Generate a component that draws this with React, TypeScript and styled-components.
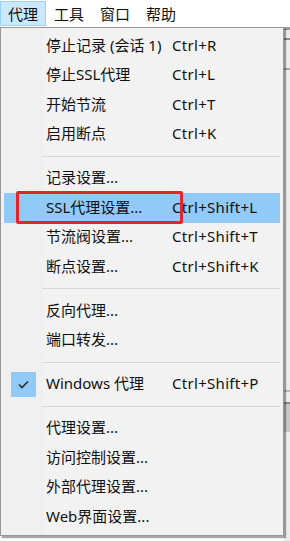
import React from "react"
import styled, { createGlobalStyle } from "styled-components"

interface Entry {
  label: string
  shortcut?: string
  checked?: boolean
  active?: boolean
}

const groups: Entry[][] = [
  [
    { label: "停止记录 (会话 1)", shortcut: "Ctrl+R" },
    { label: "停止SSL代理", shortcut: "Ctrl+L" },
    { label: "开始节流", shortcut: "Ctrl+T" },
    { label: "启用断点", shortcut: "Ctrl+K" },
  ],
  [
    { label: "记录设置..." },
    { label: "SSL代理设置...", shortcut: "Ctrl+Shift+L", active: true },
    { label: "节流阀设置...", shortcut: "Ctrl+Shift+T" },
    { label: "断点设置...", shortcut: "Ctrl+Shift+K" },
  ],
  [{ label: "反向代理..." }, { label: "端口转发..." }],
  [{ label: "Windows 代理", shortcut: "Ctrl+Shift+P", checked: true }],
  [
    { label: "代理设置..." },
    { label: "访问控制设置..." },
    { label: "外部代理设置..." },
    { label: "Web界面设置..." },
  ],
]

const topMenus = ["代理", "工具", "窗口", "帮助"]

const App = () => {
  return (
    <>
      <GlobalStyle />
      <Page>
        <MenuBar>
          {topMenus.map((m, i) => (
            <TopItem key={m} open={i === 0}>
              {m}
            </TopItem>
          ))}
        </MenuBar>

        <Body>
          <Dropdown>
            {groups.map((group, gi) => (
              <React.Fragment key={gi}>
                {gi > 0 && <Separator />}
                {group.map((item) => (
                  <Row key={item.label} active={item.active}>
                    <IconCell>
                      {item.checked && (
                        <CheckBox>
                          <svg width="25" height="25" viewBox="0 0 25 25">
                            <path
                              d="M8 12.5 L11 15.5 L17 9.5"
                              fill="none"
                              stroke="#2e2e2e"
                              strokeWidth="1.6"
                            />
                          </svg>
                        </CheckBox>
                      )}
                    </IconCell>
                    <Label>{item.label}</Label>
                    <Shortcut>{item.shortcut ?? ""}</Shortcut>
                  </Row>
                ))}
              </React.Fragment>
            ))}
          </Dropdown>

          <BackStrip>
            <StripLine tone="#9a9a9a" />
            <StripGap size={8} />
            <StripLine tone="#8c8c8c" />
            <StripGap size={28} />
            <StripLine tone="#a8a8a8" />
            <StripGap size={320} />
            <StripLine tone="#b8b8b8" />
            <StripGap size={10} />
            <StripLine tone="#8c8c8c" />
            <StripBlock />
          </BackStrip>
        </Body>

        <Annotation />
      </Page>
    </>
  )
}

export default App

const GlobalStyle = createGlobalStyle`
  html, body {
    margin: 0;
    padding: 0;
    background: #ffffff;
  }
  body {
    font-family: "Noto Sans", "Noto Sans CJK SC", sans-serif;
    color: #111111;
  }
`

const Page = styled.div`
  position: relative;
  width: 290px;
  height: 541px;
  overflow: hidden;
  background: #ffffff;
`

const MenuBar = styled.div`
  display: flex;
  height: 27px;
  padding: 1px 0;
  box-sizing: border-box;
  background: #ffffff;
`

const TopItem = styled.div<{ open?: boolean }>`
  display: flex;
  align-items: center;
  padding: 0 7px 1px;
  font-size: 15px;
  border: 1px solid ${(p) => (p.open ? "#99d1ff" : "transparent")};
  background: ${(p) => (p.open ? "#cce8ff" : "transparent")};
`

const Body = styled.div`
  display: flex;
  align-items: flex-start;
`

const Dropdown = styled.div`
  width: 284px;
  box-sizing: border-box;
  padding: 3px 3px;
  border: 1px solid #979797;
  background: linear-gradient(to right, #f0f0f0 42px, #f2f2f2 42px);
  box-shadow: 2px 2px 1px rgba(0, 0, 0, 0.35);
  position: relative;
  z-index: 1;
`

const Row = styled.div<{ active?: boolean }>`
  display: grid;
  grid-template-columns: 42px 126px auto;
  align-items: center;
  height: 29.5px;
  font-size: 15px;
  background: ${(p) => (p.active ? "#91c9f7" : "transparent")};
`

const IconCell = styled.div`
  display: flex;
  align-items: center;
  padding-left: 7px;
`

const CheckBox = styled.div`
  width: 25px;
  height: 25px;
  background: #91c9f7;
  display: flex;
`

const Label = styled.span`
  white-space: nowrap;
  line-height: 1;
  padding-bottom: 1px;
`

const Shortcut = styled.span`
  white-space: nowrap;
  line-height: 1;
  padding-bottom: 1px;
  letter-spacing: 0.3px;
`

const Separator = styled.div`
  height: 14.5px;
  display: flex;
  align-items: center;
  padding-left: 38px;

  &::after {
    content: "";
    flex: 1;
    height: 1px;
    background: #d7d7d7;
  }
`

const BackStrip = styled.div`
  flex: 1;
  height: 514px;
  display: flex;
  flex-direction: column;
  background: #ececec;
  border-top: 1px solid #a0a0a0;
`

const StripLine = styled.div<{ tone: string }>`
  height: 2px;
  background: ${(p) => p.tone};
`

const StripGap = styled.div<{ size: number }>`
  height: ${(p) => p.size}px;
`

const StripBlock = styled.div`
  height: 28px;
  background: #c8c8c8;
`

const Annotation = styled.div`
  position: absolute;
  z-index: 2;
  left: 16px;
  top: 191px;
  width: 167px;
  height: 33px;
  box-sizing: border-box;
  border: 3.5px solid #e5242b;
  border-radius: 2px;
  pointer-events: none;
`
